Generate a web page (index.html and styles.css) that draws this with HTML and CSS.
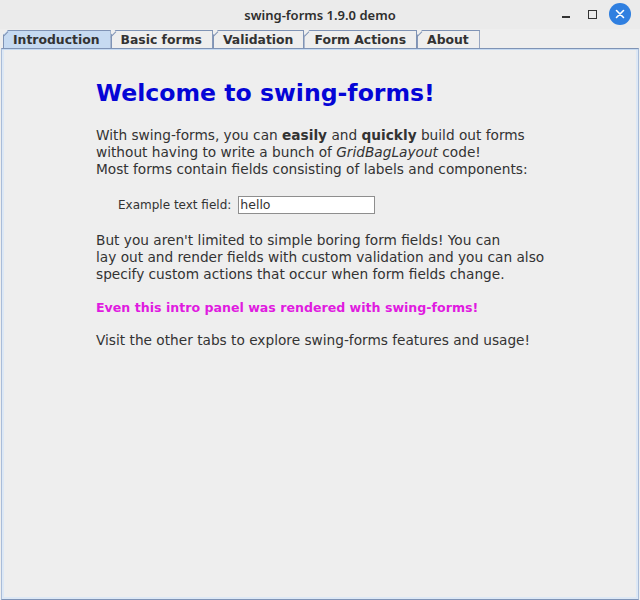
FILE: index.html
```html
<!DOCTYPE html>
<html>
<head>
<meta charset="utf-8">
<link rel="stylesheet" href="styles.css">
</head>
<body>
<div class="window">
  <div class="titlebar">
    <div class="title">swing-forms 1.9.0 demo</div>
    <div class="controls">
      <span class="ctl min"></span>
      <span class="ctl max"></span>
      <span class="ctl close">
        <svg width="22" height="22" viewBox="0 0 22 22"><circle cx="11" cy="11" r="11" fill="#2f7fe0"/><path d="M7.5 7.5 L14.5 14.5 M14.5 7.5 L7.5 14.5" stroke="#fff" stroke-width="1.6" stroke-linecap="round"/></svg>
      </span>
    </div>
  </div>
  <div class="tabs">
    <div class="tab selected">Introduction</div>
    <div class="tab">Basic forms</div>
    <div class="tab">Validation</div>
    <div class="tab">Form Actions</div>
    <div class="tab">About</div>
  </div>
  <div class="panel">
    <div class="content">
      <h1 class="heading">Welcome to swing-forms!</h1>
      <p class="para">With swing-forms, you can <b>easily</b> and <b>quickly</b> build out forms<br>without having to write a bunch of <i>GridBagLayout</i> code!<br>Most forms contain fields consisting of labels and components:</p>
      <div class="field-row">
        <span class="field-label">Example text field:</span>
        <span class="field-input">hello</span>
      </div>
      <p class="para">But you aren't limited to simple boring form fields! You can<br>lay out and render fields with custom validation and you can also<br>specify custom actions that occur when form fields change.</p>
      <p class="para magenta">Even this intro panel was rendered with swing-forms!</p>
      <p class="para">Visit the other tabs to explore swing-forms features and usage!</p>
    </div>
  </div>
</div>
</body>
</html>
```
FILE: styles.css
```css
html, body {
  margin: 0;
  padding: 0;
  background: #eeeeee;
}
.window {
  width: 640px;
  height: 600px;
  display: flex;
  flex-direction: column;
  background: #eeeeee;
  font-family: "DejaVu Sans", sans-serif;
  color: #333333;
}
.titlebar {
  height: 29px;
  background: #ebebeb;
  display: flex;
  align-items: center;
  justify-content: center;
  position: relative;
}
.title {
  font-family: "Noto Sans", sans-serif;
  font-size: 13px;
  font-weight: 600;
  color: #2e2e2e;
}
.controls {
  position: absolute;
  right: 9px;
  top: 3px;
  display: flex;
  align-items: center;
}
.ctl {
  display: flex;
  width: 26px;
  height: 22px;
  align-items: center;
  justify-content: center;
}
.min::after {
  content: "";
  width: 8px;
  height: 1.5px;
  background: #333;
  margin-top: 6px;
}
.max::after {
  content: "";
  width: 7px;
  height: 7px;
  border: 1.3px solid #333;
}
.close {
  width: 22px;
  margin-left: 4px;
}
.tabs {
  display: flex;
  padding-left: 3px;
  height: 18px;
  margin-top: 1px;
}
.tab {
  font-size: 12.4px;
  font-weight: bold;
  color: #333333;
  border-top: 1px solid #7f93b5;
  border-right: 1px solid #7f93b5;
  padding: 0 10px;
  line-height: 17px;
  height: 17px;
  position: relative;
  background: #eeeeee;
  clip-path: polygon(5px 0, 100% 0, 100% 100%, 0 100%, 0 5px);
}
.tab::before {
  content: "";
  position: absolute;
  left: 0;
  top: 0;
  width: 1px;
  height: 100%;
  background: #7f93b5;
}
.tab::after {
  content: "";
  position: absolute;
  left: -1px;
  top: 6px;
  width: 8px;
  height: 1px;
  background: #7f93b5;
  transform: rotate(-45deg);
  transform-origin: left top;
}
.tab.selected {
  background: #c6daf1;
}
.panel {
  flex: 1;
  border-top: 1px solid #7f93b5;
  border-left: 1px solid #a9bcd8;
  border-right: 1px solid #a9bcd8;
  border-bottom: 1px solid #7f93b5;
  margin: 0 1px;
  box-shadow: inset 0 1px 0 #c6daf1, inset 2px 0 0 #dde8f5, inset -2px 0 0 #dde8f5, inset 0 -2px 0 #dde8f5;
  background: #eeeeee;
}
.content {
  padding: 29px 0 0 94px;
}
.heading {
  margin: 0 0 19px 0;
  font-size: 23.6px;
  font-weight: bold;
  color: #0505d6;
  line-height: 30px;
}
.para {
  margin: 0 0 16px 0;
  font-size: 13.7px;
  line-height: 17px;
}
.field-row {
  display: flex;
  align-items: center;
  padding: 2px 0 0 22px;
  margin: 0 0 18px 0;
  gap: 7px;
}
.field-label {
  font-size: 12px;
}
.field-input {
  width: 133px;
  height: 16px;
  border: 1px solid #8e8e8e;
  background: #ffffff;
  font-size: 12.5px;
  line-height: 16px;
  padding: 0 1px;
  color: #333;
}
.magenta {
  color: #e01be0;
  font-weight: bold;
  font-size: 12.6px;
  margin-bottom: 16px;
}
```
